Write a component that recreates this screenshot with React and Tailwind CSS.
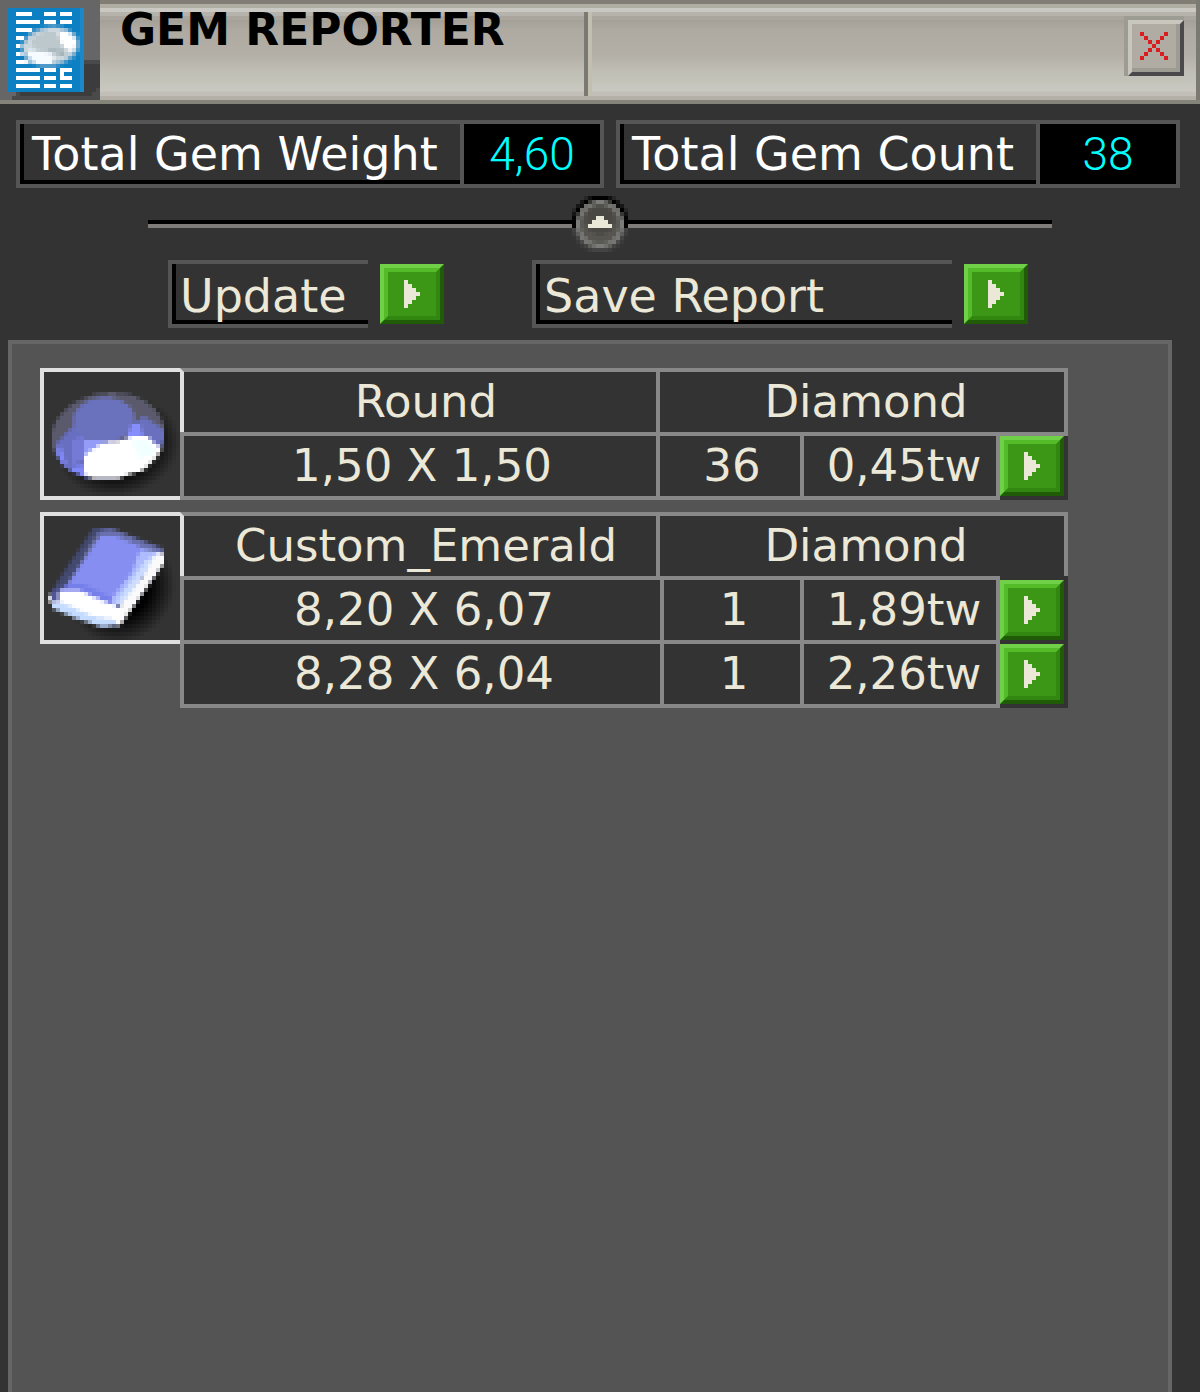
import React from "react";

const inEllipse = (x, y, [cx, cy, rx, ry, deg = 0]) => {
  const a = (deg * Math.PI) / 180;
  const dx = x - cx;
  const dy = y - cy;
  const u = (dx * Math.cos(a) + dy * Math.sin(a)) / rx;
  const v = (-dx * Math.sin(a) + dy * Math.cos(a)) / ry;
  return Math.sqrt(u * u + v * v);
};

const inPolygon = (x, y, pts) => {
  let inside = false;
  for (let i = 0, j = pts.length - 1; i < pts.length; j = i++) {
    const [xi, yi] = pts[i];
    const [xj, yj] = pts[j];
    if (yi > y !== yj > y && x < ((xj - xi) * (y - yi)) / (yj - yi) + xi) inside = !inside;
  }
  return inside;
};

const rgb = (hex) => [1, 3, 5].map((i) => parseInt(hex.slice(i, i + 2), 16));

// Samples vector shapes onto a coarse grid, giving blocky antialiased cells.
function rasterize(shapes, w, h) {
  const cells = [];
  const steps = [0.17, 0.5, 0.83];
  for (let y = 0; y < h; y++) {
    for (let x = 0; x < w; x++) {
      let sum = [0, 0, 0];
      let alpha = 0;
      for (const sy of steps) {
        for (const sx of steps) {
          let c = [0, 0, 0];
          let a = 0;
          for (const s of shapes) {
            let k = 0;
            if (s.e) {
              const d = inEllipse(x + sx, y + sy, s.e);
              k = s.soft ? Math.max(0, Math.min(1, (1 - d) / s.soft)) : d < 1 ? 1 : 0;
            } else if (inPolygon(x + sx, y + sy, s.p)) k = 1;
            if (s.clip && inEllipse(x + sx, y + sy, s.clip) >= 1) k = 0;
            if (k > 0) {
              const f = rgb(s.c);
              c = c.map((v, i) => v * (1 - k) + f[i] * k);
              a = a + k * (1 - a);
            }
          }
          sum = sum.map((v, i) => v + c[i]);
          alpha += a;
        }
      }
      if (alpha > 0.05) {
        const col = sum.map((v) => Math.round(Math.min(255, v / alpha)));
        cells.push({ x, y, fill: `rgb(${col.join(",")})`, o: Math.round((alpha / 9) * 100) / 100 });
      }
    }
  }
  return cells;
}

function Cells({ shapes, w, h }) {
  return rasterize(shapes, w, h).map((c) => (
    <rect key={`${c.x}-${c.y}`} x={c.x} y={c.y} width="1" height="1" fill={c.fill} fillOpacity={c.o} />
  ));
}

const OUT = [16, 16, 14.2, 10.8, -7];
const ROUND = [
  { e: [18.5, 18.5, 15.5, 12.5, -12], soft: 0.45, c: "#050505" },
  { e: OUT, c: "#5a5a6c" },
  { p: [[3, 18], [8, 13], [13, 8], [22, 12], [13, 20], [11, 27], [5, 24]], c: "#686ec0", clip: OUT },
  { p: [[20, 15], [25, 11], [31, 15], [32, 20], [26, 21]], c: "#6a70be", clip: OUT },
  { p: [[3, 20], [4, 18], [6, 24], [11, 23], [12, 29], [6, 26]], c: "#8088f8", clip: OUT },
  { p: [[7, 17], [10, 16], [10, 22], [7, 23]], c: "#757ad6", clip: OUT },
  { e: [15, 12, 7.8, 5.6, -4], c: "#6b72bd" },
  { p: [[10, 17], [15, 17], [11, 22], [10, 22]], c: "#939df8" },
  { p: [[22, 13], [24, 13], [25, 17], [20, 18]], c: "#878efb" },
  { p: [[10, 21], [12, 19.4], [15, 17.6], [20, 17], [22, 16], [26, 16], [28, 18], [29.6, 19], [28, 21.5], [25, 24.6], [21, 25.6], [18, 27], [13, 27], [10, 25.5]], c: "#ffffff" },
  { p: [[22, 17], [26, 17], [28, 20], [24, 22]], c: "#f1ffff" },
  { p: [[12, 25.9], [19, 25.9], [18, 27], [13, 27]], c: "#b9b9c5" },
];

const EMERALD = [
  { e: [19.5, 18.5, 14, 12.5, -45], soft: 0.5, c: "#000000" },
  { p: [[12.3, 3], [17, 3], [30, 8], [30, 12], [19, 27.5], [14.5, 28], [2.5, 23], [1, 20.5], [3, 17]], c: "#44496f" },
  { p: [[13, 4], [17, 3.2], [30, 8.5], [27, 10], [15, 6]], c: "#6970ad" },
  { p: [[13, 5], [11, 8], [9, 12], [5, 18], [8, 17], [15, 6]], c: "#686d96" },
  { p: [[14, 5], [18, 5], [27, 9], [18, 21], [12, 20], [6, 17]], c: "#868ef1" },
  { p: [[6, 17], [10, 17], [18, 21], [18, 22.5], [9, 19], [3, 19]], c: "#767eea" },
  { p: [[24, 8.5], [29, 9], [20, 22], [17, 22.5], [17, 20.5], [22, 14]], c: "#aebcff" },
  { p: [[25.5, 11], [28, 10], [20, 22], [18, 21.5]], c: "#cbdcff" },
  { p: [[28, 9.2], [30, 9.2], [30, 11.8], [19, 27.4], [17, 27], [19, 22.5], [25, 15]], c: "#fafafa" },
  { p: [[1, 20], [5, 18.5], [9, 18.6], [12, 20], [18, 22.5], [19.5, 24], [18, 27.4], [10, 25], [2, 22.5]], c: "#ffffff" },
  { p: [[2, 21.8], [5, 21.8], [12, 25], [18, 26], [18, 27.3], [14.5, 27.8], [8, 25.6], [2, 23]], c: "#c5dbff" },
  { p: [[2, 18.8], [3.8, 18.8], [3.8, 21.2], [2, 21.2]], c: "#50549b" },
];

const REPORT_GEM = [
  { e: [12.6, 11.6, 7.4, 5.1, -8], c: "#6fa6cc" },
  { e: [12.6, 11.5, 6.6, 4.4, -8], c: "#ccd8de" },
  { e: [12, 10.4, 4, 2.5, -8], c: "#bcc8cb" },
  { p: [[14.6, 8], [17, 7.8], [19, 10], [18.6, 12.8], [17, 12.8], [15, 10.5]], c: "#ffffff" },
  { p: [[7, 12.6], [10, 13], [14, 13.4], [12.8, 16], [9, 16], [6.6, 14]], c: "#f6fbff" },
  { p: [[12, 12], [17, 12.6], [16, 14], [13.6, 13.6]], c: "#a6b4b8" },
];

const KNOB = [
  { e: [7, 7.7, 6.5, 6.5], c: "#484848" },
  { e: [7, 6.7, 7, 6.8], c: "#000000" },
  { p: [[0, 8], [14, 8], [14, 14], [0, 14]], c: "#444444", clip: [7, 7.2, 7, 6.9] },
  { e: [7, 7, 6, 6], c: "#7b7b79" },
  { e: [7, 7, 4.9, 4.9], c: "#56554f" },
  { e: [7, 6, 3.6, 3.6], c: "#494843" },
];

function ReportIcon() {
  const full = [5, 17, 19, 21];
  return (
    <svg viewBox="0 0 25 25" shapeRendering="crispEdges" className="h-[100px] w-[100px] shrink-0 bg-[#666]" aria-hidden="true">
      <path d="M4 23h17V15h4v10H3v-1h1z" fill="#4a4a4a" />
      <path d="M21 16h4v6h-1v1h-1v1H5v-1h16z" fill="#3c3c3c" />
      <rect x="2" y="2" width="19" height="21" fill="#0c80c3" />
      <rect x="20" y="2" width="1" height="21" fill="#1c88c8" />
      <path d="M4 3h4v1H4zM11 3h3v1h-3zM15 3h3v1h-3zM4 7h4v1H4zM4 9h2v1H4zM4 11h2v1H4zM4 13h2v1H4zM4 15h4v1H4zM15 18h1v1h-1z" fill="#fff" />
      {full.map((y) => (
        <path key={y} d={`M4 ${y}h6v1H4zM11 ${y}h3v1h-3zM15 ${y}h3v1h-3z`} fill="#fff" />
      ))}
      <Cells shapes={REPORT_GEM} w={21} h={18} />
    </svg>
  );
}

function PlayButton({ id, label }) {
  return (
    <button
      id={id}
      aria-label={label}
      className="block h-[60px] w-16 shrink-0 cursor-pointer border-4 border-t-[#70d048] border-r-[#205c08] border-b-[#205c08] border-l-[#70d048]"
    >
      <span className="flex h-full w-full items-center justify-center border-4 border-t-[#54bc28] border-r-[#318710] border-b-[#318710] border-l-[#54bc28] bg-[#3d9717]">
        <svg viewBox="0 0 4 7" shapeRendering="crispEdges" className="h-7 w-4" aria-hidden="true">
          <path d="M0 0h1v1h1v1h1v1h1v1h-1v1h-1v1h-1v1h-1z" fill="#ece8d8" />
        </svg>
      </span>
    </button>
  );
}

function Total({ label, value }) {
  return (
    <div className="flex h-[68px] border-4 border-[#555]">
      <dt className="flex-1 border-b-4 border-l-4 border-black pt-1 pl-2 text-[46px] leading-[52px] whitespace-nowrap text-white">
        {label}
      </dt>
      <dd className="w-[140px] border-l-4 border-[#555] bg-black text-center font-['Roboto',sans-serif] text-[46px] leading-[60px] font-light text-[#00ffff]">
        {value}
      </dd>
    </div>
  );
}

function Action({ id, label, className }) {
  return (
    <div className="flex items-center gap-3">
      <label
        htmlFor={id}
        className={`h-[68px] border-y-4 border-l-4 border-[#555] ${className}`}
      >
        <span className="block h-full border-b-4 border-l-4 border-black pt-2 pl-1 text-[46px] leading-12">{label}</span>
      </label>
      <PlayButton id={id} />
    </div>
  );
}

const groups = [
  {
    shape: "Round",
    material: "Diamond",
    art: ROUND,
    inset: false,
    rows: [{ size: "1,50 X 1,50", count: "36", weight: "0,45tw" }],
  },
  {
    shape: "Custom_Emerald",
    material: "Diamond",
    art: EMERALD,
    inset: true,
    rows: [
      { size: "8,20 X 6,07", count: "1", weight: "1,89tw" },
      { size: "8,28 X 6,04", count: "1", weight: "2,26tw" },
    ],
  },
];

function GemTable({ group }) {
  const { shape, material, art, inset, rows } = group;
  return (
    <table className="w-full table-fixed border-separate border-spacing-0 text-center leading-[60px] whitespace-nowrap">
      <colgroup>
        <col className="w-[140px]" />
        <col />
        <col className="w-1" />
        <col className="w-[140px]" />
        <col className="w-[200px]" />
        <col className="w-[68px]" />
      </colgroup>
      <tbody>
        <tr>
          <td rowSpan={rows.length + 1} className="p-0 align-top">
            <div className="h-[132px] border-y-4 border-l-4 border-[#e0e0e0] bg-[#333]">
              <svg viewBox="0 0 34 31" shapeRendering="crispEdges" className="h-[124px] w-[136px]" role="img" aria-label={shape}>
                <Cells shapes={art} w={34} h={31} />
              </svg>
            </div>
          </td>
          <th className="border-t-4 border-l-4 border-t-[#888] border-l-[#e0e0e0] bg-[#333] p-0 pl-3 font-normal">{shape}</th>
          <th colSpan={4} className="border-x-4 border-t-4 border-[#888] bg-[#333] p-0 pl-2 font-normal">
            {material}
          </th>
        </tr>
        {rows.map((row, i) => {
          const end = i === rows.length - 1 ? "border-b-4" : "";
          return (
            <tr key={row.size}>
              <td colSpan={inset ? 2 : 1} className={`border-t-4 border-l-4 border-[#888] bg-[#333] p-0 pl-1 ${end}`}>
                {row.size}
              </td>
              <td colSpan={inset ? 1 : 2} className={`border-t-4 border-l-4 border-[#888] bg-[#333] p-0 pl-1 ${end}`}>
                {row.count}
              </td>
              <td className={`border-x-4 border-t-4 border-[#888] bg-[#333] p-0 pl-2 ${end}`}>{row.weight}</td>
              <td
                className={`border-t-4 border-b-[#333] bg-[#333] p-0 align-top ${end} ${
                  inset ? "border-t-[#333]" : "border-t-[#888]"
                }`}
              >
                <PlayButton label={`Show ${shape} ${row.size}`} />
              </td>
            </tr>
          );
        })}
      </tbody>
    </table>
  );
}

export default function App() {
  return (
    <div className="flex min-h-screen flex-col bg-[#333] font-['DejaVu_Sans',Verdana,sans-serif] text-[45px] text-[#ece8d8]">
      <header className="flex h-[104px] border-b-4 border-[#84847a]">
        <ReportIcon />
        <div className="flex flex-1 border-r-4 border-[#7a7a72] bg-[linear-gradient(#827e76_4px,#b0aea2_4px_8px,#cac8c2_8px_12px,#b6b2ac_12px_16px,#aaa69e_16px_20px,#a4a098_20px,#aeaaa2_30px,#b4b0a8_56px,#c0bfb5_72px,#c9c8c1_91px,#c2bfb8_92px_96px,#b4b0a8_96px)]">
          <h1 className="w-[484px] pl-5 text-[44px] leading-[60px] font-bold whitespace-nowrap text-black">GEM REPORTER</h1>
          <div className="mt-3 h-[84px] w-2 border-r-4 border-l-4 border-r-[#c3bfb0] border-l-[#7a7a72]" />
          <button
            aria-label="Close"
            className="mt-4 mr-3 ml-auto h-[60px] w-[60px] cursor-pointer border-t-4 border-l-4 border-[#9c9c92]"
          >
            <span className="block h-full border-4 border-t-[#c8c6bd] border-r-[#4a484a] border-b-[#4a484a] border-l-[#c8c6bd]">
              <span className="flex h-full items-center justify-center border-r-4 border-b-4 border-[#9c9c92] bg-[#b0aca3]">
                <svg viewBox="0 0 7 7" shapeRendering="crispEdges" className="h-7 w-7" aria-hidden="true">
                  <path
                    d="M0 0h1v1h-1zM1 1h1v1h-1zM2 2h1v1h-1zM3 3h1v1h-1zM4 4h1v1h-1zM5 5h1v1h-1zM6 6h1v1h-1zM6 0h1v1h-1zM5 1h1v1h-1zM4 2h1v1h-1zM2 4h1v1h-1zM1 5h1v1h-1zM0 6h1v1h-1z"
                    fill="#d81c20"
                  />
                </svg>
              </span>
            </span>
          </button>
        </div>
      </header>

      <dl className="mt-4 mr-5 ml-4 grid grid-cols-[588fr_564fr] gap-3">
        <Total label="Total Gem Weight" value="4,60" />
        <Total label="Total Gem Count" value="38" />
      </dl>

      <div className="mx-[148px] mt-2 flex items-center">
        <div className="h-2 flex-1 border-t-4 border-b-4 border-t-black border-b-[#7f7c79]" />
        <button aria-label="Collapse" className="h-14 w-14 cursor-pointer">
          <svg viewBox="0 0 14 14" shapeRendering="crispEdges" className="h-14 w-14" aria-hidden="true">
            <Cells shapes={KNOB} w={14} h={14} />
            <path d="M6 5h2v1h1v1h1v1H4V7h1V6h1z" fill="#ece8d8" />
          </svg>
        </button>
        <div className="h-2 flex-1 border-t-4 border-b-4 border-t-black border-b-[#7f7c79]" />
      </div>

      <div className="mt-2 flex justify-center gap-[88px] pr-1">
        <Action id="update" label="Update" className="w-[200px]" />
        <Action id="save" label="Save Report" className="w-[420px]" />
      </div>

      <main className="mt-3 mr-7 ml-2 flex flex-1 flex-col gap-3 border-x-4 border-t-4 border-[#666] bg-[#545454] pt-6 pr-[100px] pl-7">
        {groups.map((group) => (
          <GemTable key={group.shape} group={group} />
        ))}
      </main>
    </div>
  );
}
